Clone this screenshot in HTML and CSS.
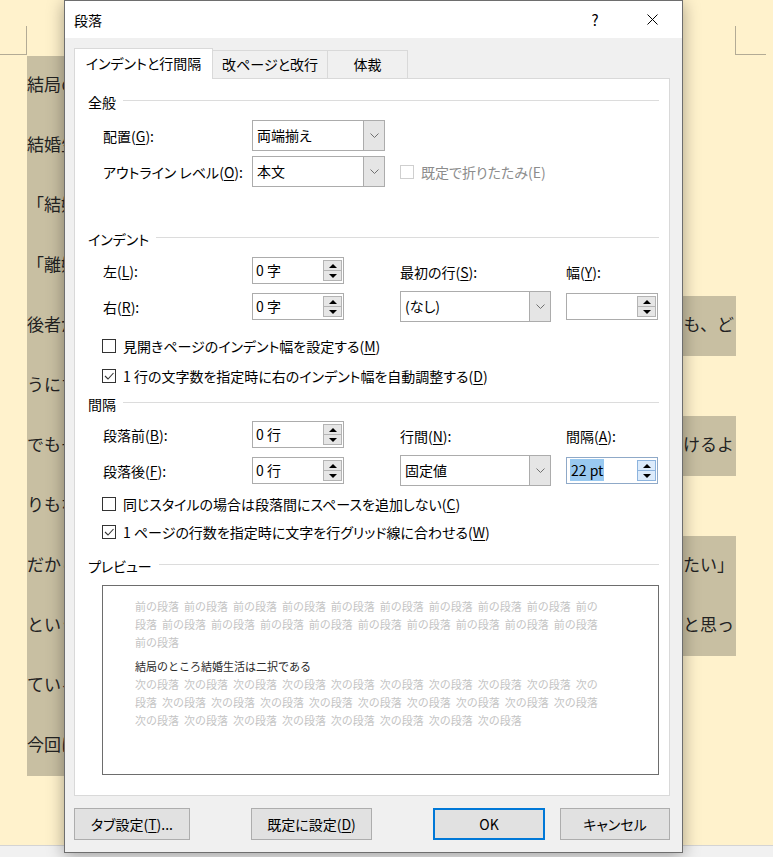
FILE: index.html
```html
<!DOCTYPE html>
<html lang="ja">
<head>
<meta charset="utf-8">
<title>段落</title>
<link rel="stylesheet" href="styles.css">
</head>
<body>
<div class="desk">
  <div class="page">
    <div class="marks"><span class="mark-l"></span><span class="mark-r"></span></div>
    <div class="lines">
      <div class="line"><span class="l">結局の</span><span class="r"></span></div>
      <div class="line"><span class="l">結婚生</span><span class="r"></span></div>
      <div class="line"><span class="l">「結婚</span><span class="r"></span></div>
      <div class="line"><span class="l">「離婚</span><span class="r"></span></div>
      <div class="line"><span class="l">後者が</span><span class="r hl">ても、ど</span></div>
      <div class="line"><span class="l">うにす</span><span class="r"></span></div>
      <div class="line"><span class="l">でもそ</span><span class="r hl">続けるよ</span></div>
      <div class="line"><span class="l">りもな</span><span class="r"></span></div>
      <div class="line"><span class="l">だから</span><span class="r hl">したい」</span></div>
      <div class="line"><span class="l">という</span><span class="r hl">だと思っ</span></div>
      <div class="line"><span class="l">ている</span><span class="r"></span></div>
      <div class="line"><span class="l">今回は</span><span class="r"></span></div>
    </div>
  </div>
  <div class="statusbar"></div>

  <div class="dialog">
    <div class="titlebar">
      <span class="title">段落</span>
      <span class="tb-btn help">?</span>
      <span class="tb-btn close"><svg width="11" height="11" viewBox="0 0 11 11"><path d="M0.5 0.5 L10.5 10.5 M10.5 0.5 L0.5 10.5" stroke="#000" stroke-width="1" fill="none"/></svg></span>
    </div>
    <div class="dlg-body">
      <div class="tabs">
        <div class="tab active">インデントと行間隔</div>
        <div class="tab t2">改ページと改行</div>
        <div class="tab t3">体裁</div>
      </div>
      <div class="panel">
        <div class="sec">全般</div>
        <div class="grid g1">
          <span class="lbl">配置(<u>G</u>):</span>
          <div class="sel w133"><span class="v">両端揃え</span><span class="dd"><svg width="9" height="5" viewBox="0 0 9 5"><path d="M0.5 0.5 L4.5 4.5 L8.5 0.5" stroke="#707070" fill="none"/></svg></span></div>
        </div>
        <div class="grid g2">
          <span class="lbl">アウトライン レベル(<u>O</u>):</span>
          <div class="sel w133"><span class="v">本文</span><span class="dd"><svg width="9" height="5" viewBox="0 0 9 5"><path d="M0.5 0.5 L4.5 4.5 L8.5 0.5" stroke="#707070" fill="none"/></svg></span></div>
          <div class="cb disabled c34"><span class="box"></span><span>既定で折りたたみ(E)</span></div>
        </div>

        <div class="sec s-indent">インデント</div>
        <div class="grid i1">
          <span class="lbl">左(<u>L</u>):</span>
          <div class="spin"><span class="val">0 字</span><span class="btns"><span class="sb"><i class="up"></i></span><span class="sb"><i class="dn"></i></span></span></div>
          <span class="lbl">最初の行(<u>S</u>):</span>
          <span class="lbl">幅(<u>Y</u>):</span>
        </div>
        <div class="grid i2">
          <span class="lbl">右(<u>R</u>):</span>
          <div class="spin"><span class="val">0 字</span><span class="btns"><span class="sb"><i class="up"></i></span><span class="sb"><i class="dn"></i></span></span></div>
          <div class="sel w151"><span class="v">(なし)</span><span class="dd"><svg width="9" height="5" viewBox="0 0 9 5"><path d="M0.5 0.5 L4.5 4.5 L8.5 0.5" stroke="#707070" fill="none"/></svg></span></div>
          <div class="spin"><span class="val"></span><span class="btns"><span class="sb"><i class="up"></i></span><span class="sb"><i class="dn"></i></span></span></div>
        </div>
        <div class="cb cbrow cb1"><span class="box"></span><span>見開きページのインデント幅を設定する(<u>M</u>)</span></div>
        <div class="cb cbrow cb2"><span class="box"><svg width="12" height="12" viewBox="0 0 12 12"><path d="M2 6 L5 9 L10.5 3" stroke="#333" stroke-width="1.1" fill="none"/></svg></span><span>1 行の文字数を指定時に右のインデント幅を自動調整する(<u>D</u>)</span></div>

        <div class="sec s-space">間隔</div>
        <div class="grid s1">
          <span class="lbl">段落前(<u>B</u>):</span>
          <div class="spin"><span class="val">0 行</span><span class="btns"><span class="sb"><i class="up"></i></span><span class="sb"><i class="dn"></i></span></span></div>
          <span class="lbl">行間(<u>N</u>):</span>
          <span class="lbl">間隔(<u>A</u>):</span>
        </div>
        <div class="grid s2">
          <span class="lbl">段落後(<u>F</u>):</span>
          <div class="spin"><span class="val">0 行</span><span class="btns"><span class="sb"><i class="up"></i></span><span class="sb"><i class="dn"></i></span></span></div>
          <div class="sel w151"><span class="v">固定値</span><span class="dd"><svg width="9" height="5" viewBox="0 0 9 5"><path d="M0.5 0.5 L4.5 4.5 L8.5 0.5" stroke="#707070" fill="none"/></svg></span></div>
          <div class="spin focus"><span class="val"><span class="selected">22 pt</span></span><span class="btns"><span class="sb"><i class="up"></i></span><span class="sb"><i class="dn"></i></span></span></div>
        </div>
        <div class="cb cbrow cb3"><span class="box"></span><span>同じスタイルの場合は段落間にスペースを追加しない(<u>C</u>)</span></div>
        <div class="cb cbrow cb4"><span class="box"><svg width="12" height="12" viewBox="0 0 12 12"><path d="M2 6 L5 9 L10.5 3" stroke="#333" stroke-width="1.1" fill="none"/></svg></span><span>1 ページの行数を指定時に文字を行グリッド線に合わせる(<u>W</u>)</span></div>

        <div class="sec s-prev">プレビュー</div>
        <div class="preview">
          <div class="pl gray">前の段落 前の段落 前の段落 前の段落 前の段落 前の段落 前の段落 前の段落 前の段落 前の</div>
          <div class="pl gray">段落 前の段落 前の段落 前の段落 前の段落 前の段落 前の段落 前の段落 前の段落 前の段落</div>
          <div class="pl gray">前の段落</div>
          <div class="pl main">結局のところ結婚生活は二択である</div>
          <div class="pl gray">次の段落 次の段落 次の段落 次の段落 次の段落 次の段落 次の段落 次の段落 次の段落 次の</div>
          <div class="pl gray">段落 次の段落 次の段落 次の段落 次の段落 次の段落 次の段落 次の段落 次の段落 次の段落</div>
          <div class="pl gray">次の段落 次の段落 次の段落 次の段落 次の段落 次の段落 次の段落 次の段落</div>
        </div>
      </div>
      <div class="footer">
        <button class="btn b1">タブ設定(<u>T</u>)...</button>
        <button class="btn b2">既定に設定(<u>D</u>)</button>
        <button class="btn b3 default">OK</button>
        <button class="btn b4">キャンセル</button>
      </div>
    </div>
  </div>
</div>
</body>
</html>
```

FILE: styles.css
```css
* { box-sizing: border-box; }

body {
  margin: 0;
  width: 773px;
  height: 857px;
  overflow: hidden;
  background: #fff2cc;
  font-family: "Noto Sans CJK JP", sans-serif;
}

.desk {
  position: relative;
  width: 773px;
  height: 857px;
}

/* ---------- document behind ---------- */
.page { height: 845px; }

.marks {
  display: flex;
  height: 56px;
  padding-top: 26px;
}
.mark-l {
  width: 27px;
  height: 29px;
  border-right: 1px solid #b3ab95;
  border-bottom: 1px solid #b3ab95;
}
.mark-r {
  margin-left: auto;
  margin-right: 7px;
  width: 31px;
  height: 29px;
  border-left: 1px solid #b3ab95;
  border-bottom: 1px solid #b3ab95;
}

.lines {
  padding: 0 37px 0 27px;
}
.line {
  display: flex;
  justify-content: space-between;
  height: 60px;
  font-size: 17px;
  color: #222;
}
.line .l {
  width: 120px;
  background: #c8bfa2;
  line-height: 56px;
  white-space: nowrap;
}
.line .r {
  width: 72px;
  display: flex;
  justify-content: flex-end;
  overflow: hidden;
  white-space: nowrap;
  line-height: 56px;
  padding-right: 2px;
}
.line .r.hl { background: #c8bfa2; }

.statusbar {
  height: 12px;
  background: #f1f1f1;
  border-top: 1px solid #d4d4d4;
}

/* ---------- dialog ---------- */
.dialog {
  position: absolute;
  left: 64px;
  top: 0;
  width: 619px;
  height: 853px;
  background: #f0f0f0;
  border: 1px solid #6e6e6e;
  box-shadow: 0 3px 16px rgba(0, 0, 0, 0.35);
  font-size: 14px;
  font-feature-settings: "palt";
  color: #000;
}

u { text-underline-offset: 2px; }

.titlebar {
  display: flex;
  align-items: center;
  height: 37px;
  background: #fff;
  padding-left: 9px;
}
.title { flex: 1; }
.tb-btn {
  display: flex;
  align-items: center;
  justify-content: center;
  width: 46px;
  height: 37px;
}
.help { margin-right: 11px; font-size: 15px; }
.close { margin-right: 7px; }

.dlg-body {
  padding: 10px 12px 0 9px;
}

.tabs {
  display: flex;
  align-items: flex-end;
  height: 30px;
  position: relative;
  z-index: 1;
}
.tab {
  display: flex;
  align-items: center;
  justify-content: center;
  height: 28px;
  background: #f0f0f0;
  border-top: 1px solid #d9d9d9;
  border-right: 1px solid #d9d9d9;
  padding-bottom: 1px;
}
.tab.active {
  width: 139px;
  height: 31px;
  margin-bottom: -1px;
  background: #fff;
  border-left: 1px solid #d9d9d9;
  padding-bottom: 3px;
}
.tab.t2 { width: 115px; }
.tab.t3 { width: 80px; }

.panel {
  height: 718px;
  background: #fff;
  border: 1px solid #d9d9d9;
  padding: 13px 10px 0 13px;
}

.sec {
  display: flex;
  align-items: center;
  height: 20px;
}
.sec::after {
  content: "";
  flex: 1;
  height: 1px;
  background: #dcdcdc;
  margin-left: 7px;
  margin-top: -3px;
}
.s-indent { margin-top: 42px; }
.s-space { margin-top: 3px; }
.s-prev { margin-top: 10px; }

.grid {
  display: grid;
  grid-template-columns: 149px 148px 166px 93px;
  align-items: center;
  padding-left: 15px;
}
.g1 { margin-top: 8px; height: 31px; }
.g2 { margin-top: 5px; height: 31px; }
.i1 { margin-top: 8px; height: 27px; }
.i2 { margin-top: 7px; height: 31px; }
.s1 { margin-top: 7px; height: 27px; }
.s2 { margin-top: 7px; height: 31px; }

.lbl { white-space: nowrap; }
.i1 .lbl:nth-child(3), .s1 .lbl:nth-child(3),
.i1 .lbl:nth-child(4), .s1 .lbl:nth-child(4) { padding-top: 2px; }

/* select */
.sel {
  display: flex;
  height: 31px;
  border: 1px solid #acacac;
  background: #fff;
}
.sel.w133 { width: 133px; }
.sel.w151 { width: 151px; }
.sel .v {
  flex: 1;
  padding-left: 4px;
  line-height: 29px;
}
.sel .dd {
  width: 21px;
  background: #e5e5e5;
  border-left: 1px solid #acacac;
  display: flex;
  align-items: center;
  justify-content: center;
}

/* spin */
.spin {
  display: flex;
  width: 92px;
  height: 27px;
  border: 1px solid #acacac;
  background: #fff;
}
.spin .val {
  flex: 1;
  padding-left: 3px;
  line-height: 24px;
}
.spin .btns {
  width: 20px;
  display: flex;
  flex-direction: column;
  padding: 2px 1px 2px 0;
}
.spin .sb {
  flex: 1;
  background: #e6e6e6;
  border: 1px solid #b4b4b4;
  display: flex;
  align-items: center;
  justify-content: center;
}
.spin .sb + .sb { border-top: none; }
.up, .dn {
  width: 0;
  height: 0;
  border-left: 4px solid transparent;
  border-right: 4px solid transparent;
}
.up { border-bottom: 4px solid #000; }
.dn { border-top: 4px solid #000; }

.spin.focus { border-color: #8fa9c8; }
.spin.focus .sb {
  background: #dcebfb;
  border-color: #8db4de;
}
.selected {
  background: #99c9f0;
  padding: 1px 1px;
}

/* checkboxes */
.cb {
  display: flex;
  align-items: center;
  white-space: nowrap;
}
.cb .box {
  width: 14px;
  height: 14px;
  border: 1px solid #333;
  background: #fff;
  margin-right: 7px;
  display: flex;
  align-items: center;
  justify-content: center;
}
.cb.disabled { color: #8c8c8c; }
.cb.disabled .box { border-color: #cfcfcf; }
.c34 { grid-column: 3 / 5; }

.cbrow { padding-left: 14px; }
.cb1 { margin-top: 9px; height: 30px; }
.cb2 { height: 30px; }
.cb3 { margin-top: 4px; height: 28px; }
.cb4 { height: 28px; }

/* preview */
.preview {
  margin: 9px 0 0 14px;
  width: 557px;
  height: 190px;
  border: 1px solid #6d6d6d;
  background: #fff;
  padding: 11px 0 0 32px;
  font-size: 11px;
  font-feature-settings: normal;
}
.pl {
  height: 18px;
  line-height: 18px;
  white-space: nowrap;
  word-spacing: 2.5px;
}
.pl.gray { color: #c4c4c4; }
.pl.main { color: #2a2a2a; margin-top: 6px; }

/* footer buttons */
.footer {
  display: flex;
  padding-top: 12px;
}
.btn {
  height: 32px;
  font-family: inherit;
  font-size: 14px;
  font-feature-settings: "palt";
  color: #000;
  background: #e1e1e1;
  border: 1px solid #adadad;
  padding: 0;
}
.b1 { width: 116px; }
.b2 { width: 121px; margin-left: 61px; }
.b3 { width: 112px; margin-left: 61px; }
.b4 { width: 110px; margin-left: 15px; }
.btn.default { border: 2px solid #0078d7; }
```
